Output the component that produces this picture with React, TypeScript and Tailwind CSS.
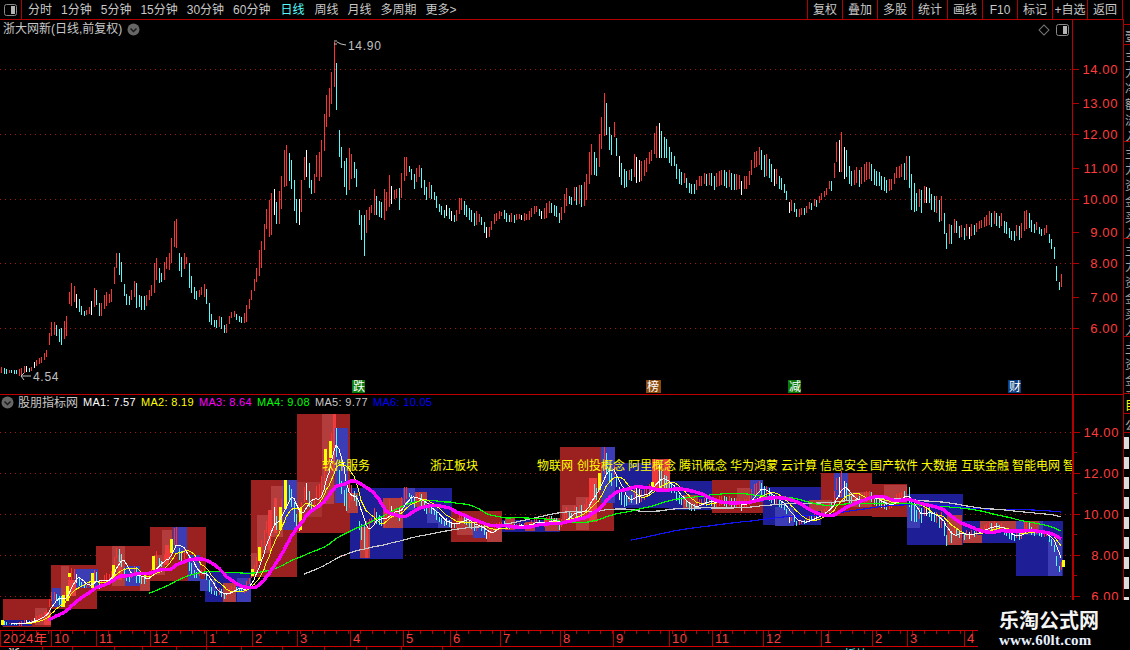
import * as React from 'react';

// [x, top, bottom] of the price bars, in page pixels of the upper panel
const KEYS: number[][] = [
    [1, 367, 373], [6, 369, 374], [9, 370, 373], [16, 370, 374], [20, 368, 376], [25, 366, 372], [30, 368, 372], [35, 361, 367],
    [42, 356, 362], [47, 349, 356], [49, 333, 345], [52, 316, 331], [54, 322, 335], [57, 326, 337], [60, 330, 345], [62, 326, 345],
    [65, 319, 336], [67, 313, 336], [69, 292, 304], [72, 279, 307], [74, 286, 302], [77, 298, 311], [80, 300, 313], [82, 311, 316],
    [87, 310, 315], [90, 306, 314], [93, 291, 317], [95, 284, 296], [97, 296, 313], [100, 306, 318], [105, 292, 307], [110, 294, 302],
    [113, 279, 301], [115, 255, 267], [118, 249, 271], [121, 262, 282], [123, 275, 288], [125, 292, 303], [128, 299, 308], [131, 290, 300],
    [133, 280, 291], [136, 283, 308], [139, 295, 307], [143, 297, 312], [148, 293, 302], [151, 285, 296], [154, 263, 293], [156, 258, 280],
    [158, 266, 283], [161, 273, 282], [164, 262, 280], [166, 257, 269], [168, 261, 273], [171, 238, 263], [173, 222, 247], [176, 219, 248],
    [178, 251, 268], [181, 257, 277], [183, 251, 272], [186, 257, 264], [189, 263, 288], [192, 282, 296], [195, 290, 301], [197, 292, 298],
    [201, 287, 295], [204, 284, 297], [207, 291, 307], [209, 303, 322], [212, 320, 326], [217, 320, 328], [219, 316, 327], [222, 318, 330],
    [225, 328, 335], [228, 317, 328], [230, 314, 319], [233, 309, 315], [237, 315, 321], [242, 318, 323], [244, 313, 323], [247, 301, 322],
    [249, 299, 309], [252, 286, 296], [255, 275, 288], [257, 260, 276], [259, 250, 276], [263, 231, 260], [267, 202, 218], [270, 199, 247],
    [273, 182, 210], [276, 202, 224], [280, 187, 224], [283, 154, 179], [285, 145, 195], [287, 145, 176], [290, 157, 183], [293, 166, 200],
    [295, 193, 222], [298, 210, 226], [300, 188, 224], [303, 165, 187], [305, 148, 173], [308, 155, 185], [311, 180, 194], [313, 184, 201],
    [316, 155, 177], [318, 155, 177], [320, 148, 184], [323, 123, 163], [326, 95, 127], [328, 93, 124], [330, 82, 110], [334, 42, 87],
    [336, 63, 110], [338, 121, 151], [341, 147, 168], [343, 157, 179], [345, 165, 195], [348, 145, 195], [352, 157, 173], [354, 162, 178],
    [356, 169, 187], [358, 207, 217], [362, 218, 247], [363, 217, 267], [367, 207, 222], [368, 208, 223], [371, 205, 213], [374, 189, 215],
    [377, 199, 215], [380, 202, 218], [382, 202, 217], [384, 189, 220], [387, 193, 207], [389, 175, 207], [392, 192, 202], [394, 190, 199],
    [397, 189, 197], [399, 188, 210], [401, 173, 198], [404, 157, 181], [407, 157, 173], [409, 166, 172], [412, 170, 184], [414, 174, 189],
    [418, 161, 175], [419, 165, 177], [422, 169, 193], [424, 180, 195], [427, 190, 202], [429, 182, 198], [432, 186, 199], [434, 192, 200],
    [437, 198, 212], [439, 204, 212], [442, 207, 216], [444, 210, 218], [447, 203, 215], [450, 210, 221], [453, 214, 222], [455, 215, 221],
    [457, 205, 221], [460, 194, 210], [462, 201, 209], [465, 201, 218], [467, 208, 215], [470, 208, 222], [473, 214, 223], [475, 212, 228],
    [478, 210, 219], [480, 217, 224], [483, 217, 228], [485, 226, 237], [488, 230, 241], [491, 221, 230], [493, 215, 226], [496, 213, 221],
    [498, 211, 221], [501, 212, 216], [503, 209, 218], [506, 213, 222], [508, 216, 222], [511, 213, 222], [513, 216, 224], [518, 213, 218],
    [522, 215, 221], [523, 212, 221], [527, 214, 219], [529, 211, 220], [532, 206, 215], [536, 206, 212], [538, 208, 214], [542, 212, 220],
    [546, 203, 218], [551, 202, 212], [560, 212, 223], [565, 190, 210], [570, 197, 203], [575, 185, 202], [585, 183, 207], [590, 143, 177],
    [597, 160, 175], [599, 135, 168], [603, 97, 128], [604, 92, 135], [607, 109, 135], [610, 140, 162], [614, 123, 138], [617, 143, 163],
    [622, 167, 190], [630, 172, 180], [635, 153, 180], [645, 162, 177], [652, 147, 157], [656, 125, 157], [658, 115, 155], [662, 132, 155],
    [668, 147, 165], [674, 155, 165], [677, 169, 187], [683, 173, 183], [690, 185, 195], [700, 177, 187], [715, 173, 187], [730, 170, 187],
    [745, 180, 193], [757, 145, 162], [765, 155, 177], [775, 167, 183], [785, 187, 195], [790, 202, 213], [795, 207, 215], [805, 205, 212],
    [815, 200, 207], [825, 187, 193], [832, 178, 188], [836, 143, 163], [841, 133, 173], [846, 150, 177], [850, 168, 183], [860, 168, 185],
    [866, 162, 180], [880, 173, 187], [887, 182, 195], [895, 170, 180], [903, 163, 177], [908, 152, 182], [912, 178, 217], [917, 197, 210],
    [921, 187, 210], [925, 183, 198], [935, 197, 213], [942, 197, 223], [946, 230, 246], [950, 222, 243], [955, 223, 235], [960, 228, 240],
    [970, 223, 235], [980, 223, 230], [990, 212, 227], [995, 210, 223], [1005, 220, 232], [1012, 233, 242], [1020, 223, 237], [1025, 209, 230],
    [1032, 220, 230], [1040, 227, 233], [1047, 225, 233], [1050, 237, 247], [1054, 248, 260], [1056, 267, 282], [1059, 280, 288], [1060, 280, 295],
    [1063, 272, 280],
];

const at = (x: number, col: number) => {
    for (let k = 1; k < KEYS.length; k++) {
        if (x <= KEYS[k][0]) {
            const a = KEYS[k - 1];
            const b = KEYS[k];
            const t = (x - a[0]) / (b[0] - a[0] || 1);
            return a[col] + (b[col] - a[col]) * t;
        }
    }
    return KEYS[KEYS.length - 1][col];
};

interface IBar {
    x: number;
    top: number;
    bot: number;
    mid: number;
    color: string;
}

const BARS: IBar[] = [];
for (let i = 0; i < 425; i++) {
    const x = Math.round(1 + i * 2.5);
    const noise = Math.sin(i * 12.9898) * 43758.5453;
    const r = noise - Math.floor(noise);
    const wobble = x > 548 ? (r - 0.5) * 7 : 0;
    const top = at(x, 1) + wobble;
    const bot = Math.max(at(x, 2) + wobble, top + 3);
    const mid = (top + bot) / 2;
    const prev = i > 0 ? BARS[i - 1].mid : mid + 1;
    const color = r > 0.94 ? '#ffffff' : mid <= prev ? '#ff3232' : '#54fcfc';
    BARS.push({ x, top, bot, mid, color });
}

const toLower = (y: number) => 514 + (y - 199) * 0.635;

const maLine = (n: number) => {
    const pts: string[] = [];
    for (let i = n - 1; i < BARS.length; i++) {
        let sum = 0;
        for (let j = i - n + 1; j <= i; j++) sum += BARS[j].mid;
        pts.push(`${BARS[i].x},${toLower(sum / n).toFixed(1)}`);
    }
    return pts.join(' ');
};

const DR = '#9b2020';
const LR = '#b33c3c';
const BR = '#e84040';
const DB = '#1e1e96';
const LB = '#3c3cb4';

// x, y, w, h, colour of the shaded boxes behind the lower chart
const BOXES: [number, number, number, number, string][] = [
    [3, 599, 48, 28, DR], [51, 565, 46, 44, DR], [96, 546, 54, 45, DR], [150, 527, 56, 54, DR], [205, 572, 46, 30, DB],
    [251, 480, 46, 97, DR], [297, 414, 53, 119, DR], [350, 488, 53, 71, DB], [403, 488, 49, 40, DB], [451, 511, 51, 31, DR],
    [502, 520, 58, 12, DB], [560, 447, 54, 84, DR], [613, 463, 56, 45, DB], [669, 481, 43, 29, DB], [712, 480, 51, 33, DR],
    [763, 487, 58, 38, DB], [821, 473, 51, 43, DR], [872, 484, 35, 33, DR], [907, 494, 56, 51, DB], [963, 521, 53, 22, DB],
    [1016, 521, 47, 55, DB],
    [2, 620, 30, 6, DB], [35, 608, 12, 17, LR], [44, 612, 7, 13, BR],
    [52, 588, 11, 19, LB], [61, 566, 8, 30, LR], [75, 569, 23, 19, LB], [68, 580, 8, 16, BR],
    [112, 546, 13, 40, LR], [125, 566, 15, 20, LB], [140, 576, 10, 15, LR], [118, 555, 4, 25, BR],
    [155, 555, 10, 20, LR], [162, 530, 10, 30, LR], [173, 527, 14, 26, LB], [188, 555, 12, 26, LB], [165, 545, 4, 20, BR],
    [200, 579, 16, 12, LB], [223, 583, 13, 19, LR], [237, 578, 14, 24, LB],
    [251, 553, 7, 20, LR], [257, 515, 14, 38, LR], [271, 486, 12, 51, LR], [283, 480, 14, 50, LB], [268, 510, 3, 40, BR], [274, 498, 3, 35, BR],
    [297, 482, 25, 35, '#a83232'], [322, 414, 12, 90, LR], [333, 414, 3, 60, BR], [335, 428, 13, 75, LB], [347, 493, 11, 20, LR],
    [360, 527, 10, 31, LR], [365, 527, 3, 31, BR], [383, 498, 20, 30, LR], [403, 488, 12, 22, LB], [415, 492, 12, 15, LR], [427, 507, 11, 16, LB], [438, 520, 14, 8, LB],
    [457, 518, 16, 17, LR], [473, 528, 14, 10, LB], [487, 528, 15, 14, LR],
    [505, 517, 10, 13, LR], [525, 522, 10, 9, LR], [545, 518, 15, 13, LR],
    [562, 505, 14, 17, LR], [576, 497, 13, 33, LR], [589, 478, 8, 44, BR], [601, 447, 14, 56, LB],
    [626, 490, 13, 15, LB], [652, 459, 18, 31, BR], [658, 459, 6, 31, LR], [683, 495, 15, 13, LR],
    [737, 488, 13, 15, LR], [750, 480, 13, 22, LB], [775, 507, 19, 19, LB], [809, 500, 12, 11, LR],
    [821, 500, 11, 13, LR], [834, 473, 14, 25, LB], [848, 492, 24, 15, LR], [884, 485, 23, 18, LR],
    [907, 505, 13, 23, LB], [947, 515, 15, 30, LR], [963, 535, 19, 8, LR], [980, 521, 36, 11, LR],
    [1016, 521, 27, 14, LB], [1024, 521, 15, 11, LR], [1048, 540, 14, 36, LB],
];

const YELLOW_BARS: number[][] = [
    [1, 620, 3, 5], [62, 595, 3, 12], [66, 586, 3, 15], [68, 573, 3, 4], [91, 573, 3, 15], [112, 565, 3, 13], [152, 556, 3, 14], [170, 539, 3, 14],
    [251, 569, 3, 7], [258, 547, 3, 14], [279, 507, 3, 23], [284, 480, 3, 29], [299, 508, 3, 22], [324, 449, 3, 16], [329, 441, 3, 17],
    [598, 473, 3, 17], [651, 482, 3, 9], [1062, 560, 3, 7],
];

const LABELS: [number, string][] = [
    [322, '软件服务'], [430, '浙江板块'], [537, '物联网'], [577, '创投概念'], [628, '阿里概念'], [679, '腾讯概念'], [730, '华为鸿蒙'],
    [781, '云计算'], [820, '信息安全'], [870, '国产软件'], [921, '大数据'], [961, '互联金融'], [1012, '智能电网'], [1063, '智'],
];

const TOOLS = ['1分钟', '5分钟', '15分钟', '30分钟', '60分钟'];
const TABS = ['复权', '叠加', '多股', '统计', '画线', 'F10', '标记', '+自选', '返回'];
const MAS = [
    ['MA1: 7.57', 'text-white'], ['MA2: 8.19', 'text-[#ffff00]'], ['MA3: 8.64', 'text-[#ff00ff]'],
    ['MA4: 9.08', 'text-[#00ff00]'], ['MA5: 9.77', 'text-[#c8c8c8]'], ['MA6: 10.05', 'text-[#0000ff]'],
];
const MONTHS: [string, number][] = [
    ['2024年', 51], ['10', 45], ['11', 54], ['12', 56], ['1', 46], ['2', 45], ['3', 53], ['4', 53], ['5', 47], ['6', 50], ['7', 60],
    ['8', 53], ['9', 56], ['10', 43], ['11', 51], ['12', 58], ['1', 51], ['2', 35], ['3', 57], ['4', 20],
];

const TICKS = Array.from({ length: 82 }, (_, i) => 12 + i * 12);

const PanelIcon = () => (
    <svg width="13" height="12" viewBox="0 0 13 12">
        <rect x="0.5" y="0.5" width="12" height="11" rx="2" fill="none" stroke="#8a8a8a" />
        <rect x="7" y="2" width="4" height="8" fill="#b4b4b4" />
    </svg>
);

const Chevron = () => (
    <svg width="13" height="13" viewBox="0 0 13 13">
        <circle cx="6.5" cy="6.5" r="6" fill="#666666" />
        <path d="M3.5 5.5 L6.5 8.5 L9.5 5.5" fill="none" stroke="#1a1a1a" strokeWidth="1.5" />
    </svg>
);

const Grid = ({ ys }: { ys: number[] }) => (
    <>
        {ys.map((y) => (
            <line key={y} x1="0" x2="1072" y1={y + 0.5} y2={y + 0.5} stroke="#a51414" strokeDasharray="1 4" />
        ))}
    </>
);

const Axis = ({ top, height, labels, minor }: { top: number; height: number; labels: [string, number][]; minor: number[] }) => (
    <svg width="50" height={height} viewBox={`1073 ${top} 50 ${height}`} className="block">
        {labels.map(([text, y]) => (
            <g key={text}>
                <rect x="1073" y={y} width="6" height="1" fill="#b00000" />
                <text x="1118" y={y + 5} textAnchor="end" fontSize="13" letterSpacing="0.6" fill="#ff3c3c">
                    {text}
                </text>
            </g>
        ))}
        {minor.map((y) => (
            <rect key={y} x="1073" y={y} width="3" height="1" fill="#b00000" />
        ))}
    </svg>
);

const RailCell = ({ h, chars, color = 'text-[#a8a8a8]' }: { h: string; chars: string; color?: string }) => (
    <div className={`${h} shrink-0 border-b border-[#b00000] overflow-hidden pt-1 leading-4 text-xs ${color}`}>
        {chars.split('').map((c, i) => (
            <div key={i} className="w-3 ml-[1px]">
                {c}
            </div>
        ))}
    </div>
);

const App: React.FunctionComponent = () => {
    return (
        <div className="relative w-[1130px] h-[650px] overflow-hidden bg-black flex flex-col font-['Liberation_Sans','Noto_Sans_CJK_SC',sans-serif] text-[#c8c8c8]">
            {/* top bar */}
            <div className="h-5 flex items-center border-b border-[#b00000] text-xs w-[1124px] shrink-0">
                <div className="w-[22px] h-full flex items-center justify-center border-r border-[#b00000]">
                    <PanelIcon />
                </div>
                <div className="flex items-center ml-[6px] gap-[9px]">
                    <span>分时</span>
                    {TOOLS.map((t) => (
                        <span key={t}>{t}</span>
                    ))}
                    <span className="text-[#54fcfc] ml-[1px]">日线</span>
                    <span className="ml-[1px]">周线</span>
                    <span>月线</span>
                    <span>多周期</span>
                    <span>更多&gt;</span>
                </div>
                <div className="flex ml-auto h-full">
                    {TABS.map((t) => (
                        <div key={t} className="w-[35px] flex items-center justify-center border-l border-[#b00000] whitespace-nowrap">
                            {t}
                        </div>
                    ))}
                    <div className="w-[2px] border-l border-[#b00000]" />
                </div>
            </div>

            <div className="flex flex-1 min-h-0">
                <div className="w-[1123px] flex flex-col">
                    {/* price panel */}
                    <div className="relative h-[375px] flex border-b border-[#c00000]">
                        <div className="relative w-[1072px]">
                            <svg width="1072" height="374" viewBox="0 20 1072 374" className="block">
                                <Grid ys={[69, 134, 199, 263, 328]} />
                                {BARS.map((b) => (
                                    <rect key={b.x} x={b.x} y={b.top} width="1" height={b.bot - b.top} fill={b.color} shapeRendering="crispEdges" />
                                ))}
                                <path d="M334 41 H337 M334 44 H337 M337 42 L341 44 L346 45" fill="none" stroke="#c0c0c0" />
                                <text x="348" y="50" fontSize="12" letterSpacing="0.7" fill="#c0c0c0">
                                    14.90
                                </text>
                                <path d="M21 376 H31 M21 376 L24 373 M21 376 L24 380" fill="none" stroke="#c0c0c0" />
                                <text x="33" y="381" fontSize="12" letterSpacing="0.7" fill="#c0c0c0">
                                    4.54
                                </text>
                                {[
                                    [352, '跌', '#0a7a0a', 13],
                                    [646, '榜', '#8a4a10', 15],
                                    [788, '减', '#0a7a0a', 13],
                                    [1008, '财', '#0c3f80', 13],
                                ].map(([x, t, c, w]) => (
                                    <g key={t as string}>
                                        <rect x={x as number} y="380" width={w as number} height="13" fill={c as string} />
                                        <text x={(x as number) + 1} y="391" fontSize="12" fill="#ffffff">
                                            {t}
                                        </text>
                                    </g>
                                ))}
                            </svg>
                            <div className="absolute top-[1px] left-[3px] flex items-center gap-[5px] text-xs">
                                <span>浙大网新(日线,前复权)</span>
                                <Chevron />
                            </div>
                            <div className="absolute top-[4px] right-[3px] flex items-center gap-[8px]">
                                <span className="w-2 h-2 rotate-45 border border-[#777777]" />
                                <PanelIcon />
                            </div>
                        </div>
                        <div className="border-l border-[#c00000] w-[51px]">
                            <Axis
                                top={20}
                                height={374}
                                labels={[['14.00', 69], ['13.00', 103], ['12.00', 134], ['11.00', 168], ['10.00', 199], ['9.00', 232], ['8.00', 263], ['7.00', 297], ['6.00', 328]]}
                                minor={[]}
                            />
                        </div>
                    </div>

                    {/* indicator panel */}
                    <div className="relative h-[235px] flex">
                        <div className="relative w-[1072px]">
                            <svg width="1072" height="235" viewBox="0 395 1072 235" className="block">
                                <Grid ys={[432, 473, 514, 555, 596]} />
                                {BOXES.map(([x, y, w, h, c], i) => (
                                    <rect key={i} x={x} y={y} width={w} height={h} fill={c} shapeRendering="crispEdges" />
                                ))}
                                {BARS.map((b) => (
                                    <rect key={b.x} x={b.x} y={toLower(b.top)} width="1" height={(b.bot - b.top) * 0.635} fill={b.color} shapeRendering="crispEdges" />
                                ))}
                                {YELLOW_BARS.map(([x, y, w, h]) => (
                                    <rect key={`${x}-${y}`} x={x} y={y} width={w} height={h} fill="#ffff00" shapeRendering="crispEdges" />
                                ))}
                                <g shapeRendering="crispEdges" fill="none">
                                    <polyline points={maLine(253)} stroke="#1414f0" strokeWidth="1.2" />
                                    <polyline points={maLine(122)} stroke="#c8c8c8" strokeWidth="1.2" />
                                    <polyline points={maLine(60)} stroke="#00ff00" strokeWidth="1.2" />
                                    <polyline points={maLine(10)} stroke="#ffff00" strokeWidth="1" />
                                    <polyline points={maLine(5)} stroke="#ffffff" strokeWidth="1" />
                                    <polyline points={maLine(20)} stroke="#ff00ff" strokeWidth="3.4" />
                                </g>
                                {LABELS.map(([x, t]) => (
                                    <text key={x} x={x} y="470" fontSize="12" fill="#ffff00">
                                        {t}
                                    </text>
                                ))}
                            </svg>
                            <div className="absolute top-0 left-[1px] flex items-center h-[15px] text-xs">
                                <Chevron />
                                <span className="ml-[4px] w-[65px]">股朋指标网</span>
                                {MAS.map(([t, c]) => (
                                    <span key={t} className={`w-[58px] whitespace-nowrap text-[11px] tracking-[0.3px] ${c}`}>
                                        {t}
                                    </span>
                                ))}
                            </div>
                        </div>
                        <div className="border-l-2 border-[#b00000] w-[51px]">
                            <Axis
                                top={395}
                                height={235}
                                labels={[['14.00', 432], ['12.00', 473], ['10.00', 514], ['8.00', 555], ['6.00', 596]]}
                                minor={[452, 493, 534, 575]}
                            />
                        </div>
                    </div>

                    {/* time axis */}
                    <div className="relative h-4 flex border-t border-[#d00000] text-[13px] leading-[15px] text-[#ff3c3c] tracking-[0.5px]">
                        {MONTHS.map(([m, w], i) => (
                            <div key={i} style={{ width: w }} className="border-l border-[#b00000] pl-[2px] whitespace-nowrap overflow-hidden shrink-0">
                                {m}
                            </div>
                        ))}
                        <svg width="1000" height="3" className="absolute top-0 left-0">
                            {TICKS.map((x) => (
                                <rect key={x} x={x} y="0" width="1" height="3" fill="#b00000" />
                            ))}
                        </svg>
                    </div>
                    <div className="h-1 flex border-t border-[#d00000] overflow-hidden text-xs">
                        <div className="w-[43px] pl-2 border-r border-[#b00000] text-white">浙</div>
                        <div className="w-[30px] border-r border-[#b00000]" />
                        <div className="w-[42px] border-r border-[#b00000]" />
                        <div className="w-[28px] border-r border-[#b00000]" />
                        <div className="w-[34px] border-r border-[#b00000]" />
                        <div className="w-[30px] border-r border-[#b00000]" />
                        <div className="w-[35px] border-r border-[#b00000]" />
                        <div className="w-[41px] border-r border-[#b00000]" />
                        <div className="w-[42px] border-r border-[#b00000]" />
                        <div className="w-[42px] border-r border-[#b00000]" />
                        <div className="w-[35px] border-r border-[#b00000]" />
                        <div className="w-[41px] border-r border-[#b00000]" />
                        <div className="w-[400px] pl-[401px] text-[#54fcfc] whitespace-nowrap">板块</div>
                    </div>
                </div>

                {/* clipped side rail */}
                <div className="w-[7px] border-l border-[#b00000] flex flex-col overflow-hidden">
                    <div className="h-[5px] shrink-0 border-b border-[#b00000] -ml-[1px]" />
                    <RailCell h="h-5" chars="壹" />
                    <RailCell h="h-[97px]" chars="主力净额流入占比" />
                    <RailCell h="h-[97px]" chars="主力资金买入卖出" />
                    <RailCell h="h-[98px]" chars="主力资金买入净额" />
                    <RailCell h="h-[57px]" chars="主资金买" />
                    <RailCell h="h-5" chars="目" color="text-[#ffff00]" />
                    <RailCell h="h-[19px]" chars="公" />
                    <div className="flex flex-col gap-2 pt-1">
                        {Array.from({ length: 9 }).map((_, i) => (
                            <div key={i} className="w-[5px] h-3 bg-[#dcdcdc] shrink-0" />
                        ))}
                    </div>
                </div>
            </div>

            {/* watermark */}
            <div className="absolute right-0 bottom-0 w-[152px] h-[50px] bg-black flex flex-col pl-[21px] pt-[8px]">
                <div className="font-['Noto_Sans_CJK_SC',sans-serif] font-bold text-[20px] leading-[24px] text-[#f4f4f4] whitespace-nowrap">乐淘公式网</div>
                <div className="font-['Liberation_Serif',serif] font-bold text-[15px] leading-[16px] text-[#e8f0ff] tracking-[0.2px] whitespace-nowrap">www.60lt.com</div>
            </div>
        </div>
    );
};

export default App;
